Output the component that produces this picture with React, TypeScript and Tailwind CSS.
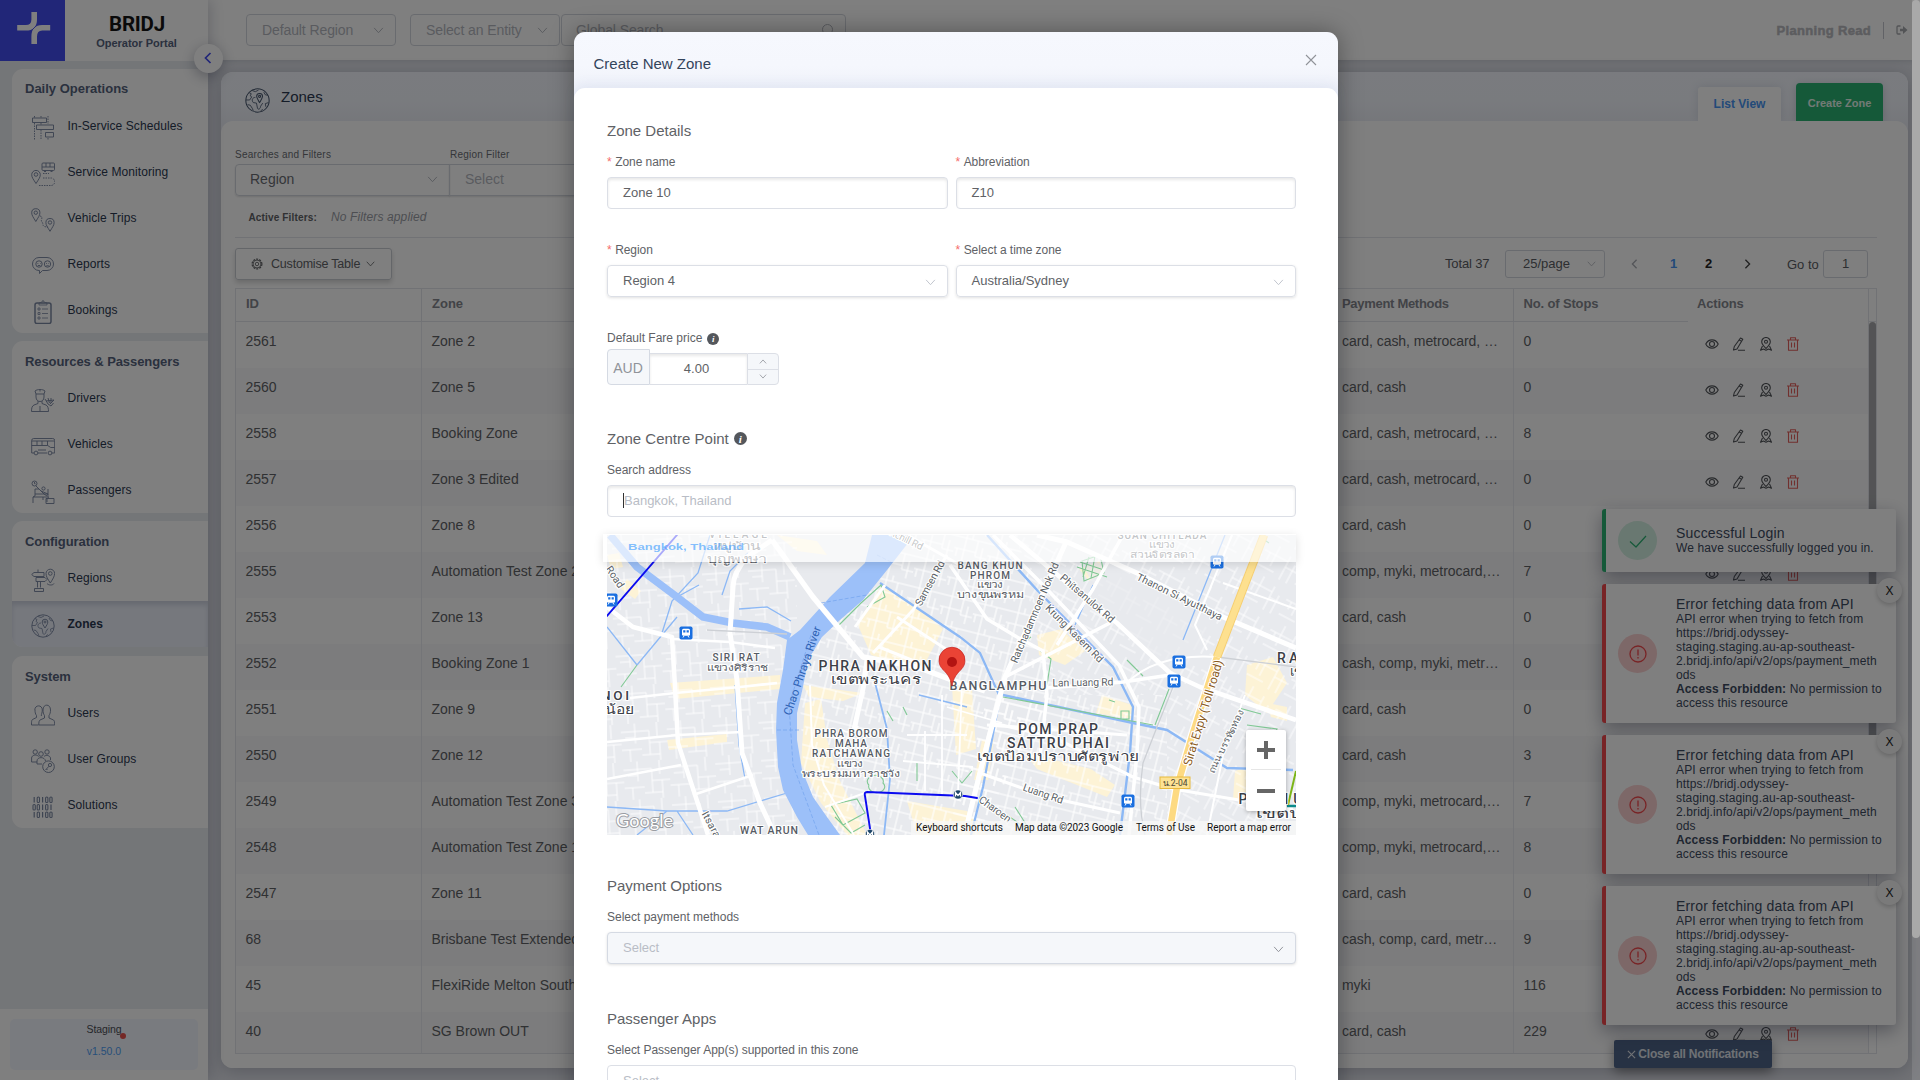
import React from "react";
import type { ReactNode } from "react";

type IconProps = { className?: string };

const Stroke = ({ className = "", w = 1, box = 24, children }: IconProps & { w?: number; box?: number; children: ReactNode }) => (
  <svg viewBox={`0 0 ${box} ${box}`} className={className} fill="none" stroke="currentColor" strokeWidth={w} strokeLinejoin="round">
    {children}
  </svg>
);

const Chevron = ({ className = "" }: IconProps) => (
  <svg viewBox="0 0 12 8" className={className} fill="none" stroke="currentColor" strokeWidth="1.1">
    <path d="M1 1l5 5.5L11 1" />
  </svg>
);

const navIcons: Record<string, ReactNode> = {
  schedules: (
    <>
      <rect x="1.5" y="2" width="14" height="4.5" />
      <rect x="5.5" y="9" width="17" height="4.5" />
      <rect x="14.5" y="16.5" width="8" height="4.5" />
      <path d="M3.5 7v17M10 14v10M3.5 0v2M10 0v2M10 7v2M17 0v8M17 22v2" strokeDasharray="1.5 1" />
    </>
  ),
  monitoring: (
    <>
      <rect x="11" y="1" width="12.5" height="7.5" rx="1" />
      <path d="M11 5h12.5M15 1v4M19 1v4M13 9.5h2M19.5 9.5h2" />
      <path d="M5 21.500C2.500 17.500.7 15.500.7 12.700a4.300 4.300 0 018.600 0c0 2.800-1.800 4.800-4.300 8.800z" />
      <circle cx="5" cy="12.500" r="1.800" />
      <path d="M12 11.500h6M12 16h8a3.500 3.500 0 010 7.500H7" strokeDasharray="1.500 1" />
    </>
  ),
  trips: (
    <>
      <path d="M4.800 13.500C2.500 9.500.7 7.500.7 4.800a4.100 4.100 0 018.200 0c0 2.700-1.800 4.700-4.100 8.700z" />
      <circle cx="4.800" cy="4.700" r="1.700" />
      <path d="M19 23.300c-2.300-4-4.100-6-4.100-8.700a4.100 4.100 0 018.200 0c0 2.700-1.800 4.700-4.100 8.700z" />
      <circle cx="19" cy="14.500" r="1.700" />
      <path d="M9 8c4 1 0 4 2 6s-1 5 6 5" strokeDasharray="1.500 1" />
    </>
  ),
  reports: (
    <>
      <path d="M8 3.500h8a6 6 0 010 13h-4.500l-3 3v-3H8a6 6 0 010-13z" />
      <circle cx="8" cy="10" r="3.200" />
      <circle cx="16.500" cy="10" r="3.200" />
      <path d="M6.500 9.500h.8M9 9.500h.6M6.800 11.500h2.500M15 9.500h.8M17.500 9.500h.6M15.300 11.800h2.500" />
    </>
  ),
  bookings: (
    <>
      <rect x="4" y="3" width="16" height="20.500" rx="2" strokeWidth="1.500" />
      <path d="M8 5V3l3-1 1-1.700L13 2l3 1v2zM7 8h2v2H7zM7 12.500h2v2H7zM7 17h2v2H7zM11 9h6M11 13.500h6M11 18h6" strokeWidth="0.800" />
    </>
  ),
  drivers: (
    <>
      <path d="M4 3c2-2 8-2 10 0l-1 3H5zM5 6v3c0 6 8 6 8 0V6M7 13v2.500L3 17c-2 1-2.500 3-2.500 6.500h17c0-3-.5-5.500-2.500-6.500l-4-1.500V13M9 18v5.500M9 2v1.500" />
      <path d="M14 11l3 5M17 10l1.500 5M20 10v5M23 12l-4 4M15 13l8-1M17 16l3 2 2.500-3" />
    </>
  ),
  vehicles: (
    <>
      <path d="M.7 6.500a2 2 0 012-2h19a2 2 0 012 2V19h-3M3 19H.7V6.500M7 19h9M.7 11.500h16l3 2h4M.7 7h23M6 7v4.500M11 7v4.500M16.500 7v4.500M7 16h8" />
      <circle cx="5" cy="19" r="1.900" />
      <circle cx="19" cy="19" r="1.900" />
    </>
  ),
  passengers: (
    <>
      <circle cx="3.500" cy="3.500" r="2.500" />
      <circle cx="12.500" cy="8.500" r="1.600" />
      <path d="M3.500 2v1.700h1M5 6l3 3M2 23v-6l2-1V9h4M8 9l5 5 3 2v6M4 14h12M10 11l7 3M17 9v6M2 17h13M15 18.500h8v5h-8zM17.500 18.500l-1-5M12 17v3" />
    </>
  ),
  regions: (
    <>
      <path d="M3 4.500h10v4H3l-2.300-2zM5 9.500h9l2 2-2 2H5zM7 1.500v3M6.500 13.500v6M9.500 13.500v6M3.500 20.500h9v3h-9z" />
      <path d="M19.300 15c-2.500-4-4.300-6.500-4.300-9.500a4.300 4.300 0 018.600 0c0 3-1.800 5.500-4.300 9.500z" />
      <circle cx="19.300" cy="5.500" r="1.800" />
      <path d="M16 15.500c1.500 2 6 2 7 0" />
    </>
  ),
  zones: (
    <>
      <circle cx="12" cy="12" r="11.200" />
      <path d="M14 14c-1.800-3-2.800-4.200-2.800-6a2.800 2.800 0 015.600 0c0 1.800-1 3-2.800 6z" />
      <circle cx="14" cy="8" r="1" />
      <path d="M4 4.500l2 1-1 2 1.500 1-2 3-3.500 0M7 2.500l3 1 3-1.500M10 9c-3 0-4 3-2 5l3 .5 1 5c1 2 3 0 3-2l2-3M18 4l1.500 2.500 2.500.5M22.500 14l-3 1 .5 3M2.500 16l2.500.5 2 3 1 2.500M15 22l2-1.500" strokeWidth="0.800" />
    </>
  ),
  users: (
    <>
      <path d="M3.800 7c0-5.500 7.500-5.500 7.500 0 0 3-1 3.500-1 6M4 7c0 2 .3 4 1.500 5.500v2l-4 2c-1 1-1 2-1 5.500h7" />
      <path d="M12 7c0-6.500 7.500-6.500 7.500 0 0 2.500-.5 4-1.500 5.500V15l4.500 2c1 1 1.200 2 1.200 5H7.800c0-3 .2-4 1.200-5l4.500-2v-2.500C12.500 11 12 9.500 12 7z" />
    </>
  ),
  groups: (
    <>
      <circle cx="4.200" cy="3" r="2.200" />
      <circle cx="16" cy="3" r="2.200" />
      <circle cx="10" cy="5" r="2.300" />
      <path d="M.6 13V9c0-3 5-4 7-1.500M.6 13H6M13 7.500c2-2 6-1 6.500 1.500v2M6 15v-3c0-4.500 8-4.500 8.500 0M6 15h5" />
      <circle cx="17.500" cy="17.700" r="5.800" />
      <circle cx="19" cy="16" r="1.600" />
      <path d="M18 17.200L14.500 21M15.500 20l1 1" />
    </>
  ),
  solutions: (
    <>
      {[
        [2, "10100"],
        [9.5, "00101"],
        [17, "10100"],
      ].map(([y, bits]) =>
        String(bits)
          .split("")
          .map((b, i) =>
            b === "1" ? (
              <path key={`${y}-${i}`} d={`M${3.2 + i * 4.2} ${y}v5.500`} strokeWidth="1.200" />
            ) : (
              <rect key={`${y}-${i}`} x={2 + i * 4.2} y={Number(y)} width="2.300" height="5.500" rx="1.100" strokeWidth="1.100" />
            ),
          ),
      )}
    </>
  ),
};

const groups = [
  { title: "Daily Operations", items: [["schedules", "In-Service Schedules"], ["monitoring", "Service Monitoring"], ["trips", "Vehicle Trips"], ["reports", "Reports"], ["bookings", "Bookings"]] },
  { title: "Resources & Passengers", items: [["drivers", "Drivers"], ["vehicles", "Vehicles"], ["passengers", "Passengers"]] },
  { title: "Configuration", items: [["regions", "Regions"], ["zones", "Zones"]] },
  { title: "System", items: [["users", "Users"], ["groups", "User Groups"], ["solutions", "Solutions"]] },
];

function Sidebar() {
  return (
    <aside className="relative z-10 flex w-[208px] shrink-0 flex-col bg-[#e9ecf0] shadow-[2px_0_14px_rgba(60,65,90,0.25)]">
      <div className="flex h-[61px] bg-white">
        <div className="h-[61px] w-[65px] bg-[#434cf0]">
          <svg viewBox="0 0 65 61" className="h-[61px] w-[65px]" fill="none" stroke="#fff" strokeWidth="5.600">
            <path d="M34.200 12v7.500q0 8.300-8.500 8.300h-8.500" />
            <path d="M34.200 44v-7.500q0-8.800 8-8.800h8" />
            <path d="M29 33l11-11" stroke="#434cf0" strokeWidth="0.900" />
          </svg>
        </div>
        <div className="flex flex-1 flex-col items-center pt-[14px]">
          <div className="pl-px font-[Roboto] text-[20.500px] leading-[20px] font-bold tracking-[-0.200px] text-[#141414]">BRIDJ</div>
          <div className="mt-[2px] text-[11px] leading-[14px] font-bold text-[#55627c]">Operator Portal</div>
        </div>
      </div>
      <div className="absolute top-[44px] left-[194px] flex size-[29px] items-center justify-center rounded-full bg-white pr-[2px] pb-[2px] shadow-[0_4px_14px_rgba(40,45,70,0.35)]">
        <svg viewBox="0 0 8 12" className="h-[12px] w-[8px]" fill="none" stroke="#434cf0" strokeWidth="1.700">
          <path d="M6.500 1L1.500 6l5 5" />
        </svg>
      </div>
      <nav className="flex flex-1 flex-col gap-2 pt-2 pl-3">
        {groups.map((g, gi) => (
          <section key={g.title} className="overflow-hidden rounded-l-[11px] bg-white last:mt-px">
            <h3 className={gi === 0 ? "h-[34px] pt-[12px] pl-[13px] text-[13px] leading-[16px] font-bold whitespace-nowrap text-[#55627c]" : "h-[34px] pt-[12.500px] pl-[13px] text-[13px] leading-[16px] font-bold tracking-[-0.080px] whitespace-nowrap text-[#55627c]"}>{g.title}</h3>
            {g.items.map(([icon, label]) => {
              const active = label === "Zones";
              return (
                <div key={label} className={active ? "flex h-[46px] items-center bg-[#edf1fb] pl-[19px] shadow-[inset_0_4px_5px_rgba(70,80,110,0.18)]" : "flex h-[46px] items-center pl-[19px]"}>
                  <Stroke className="mt-[3px] size-6 text-[#7b88a3]" w={0.95}>
                    {navIcons[icon]}
                  </Stroke>
                  <span className={active ? "ml-[12.500px] pb-px text-[12px] font-bold text-[#2b3850]" : "ml-[12.500px] pb-px text-[12px] tracking-[0.080px] text-[#2b3850]"}>{label}</span>
                </div>
              );
            })}
          </section>
        ))}
      </nav>
      <div className="h-[71px] bg-white px-[10px] pt-[10px]">
        <div className="flex h-[51px] flex-col items-center rounded-[5px] bg-[#f3f6fe] pt-[3px] text-[10.500px] leading-[14px]">
          <div className="relative tracking-[-0.100px] text-[#4a4d55]">
            Staging
            <span className="absolute top-[11px] -right-[5px] size-[6px] rounded-full bg-[#e8504c]" />
          </div>
          <div className="mt-[8px] text-[#4f9ff5]">v1.50.0</div>
        </div>
      </div>
    </aside>
  );
}

const rows: [string, string, string, string][] = [
  ["2561", "Zone 2", "card, cash, metrocard, …", "0"],
  ["2560", "Zone 5", "card, cash", "0"],
  ["2558", "Booking Zone", "card, cash, metrocard, …", "8"],
  ["2557", "Zone 3 Edited", "card, cash, metrocard, …", "0"],
  ["2556", "Zone 8", "card, cash", "0"],
  ["2555", "Automation Test Zone 2", "comp, myki, metrocard,…", "7"],
  ["2553", "Zone 13", "card, cash", "0"],
  ["2552", "Booking Zone 1", "cash, comp, myki, metr…", "0"],
  ["2551", "Zone 9", "card, cash", "0"],
  ["2550", "Zone 12", "card, cash", "3"],
  ["2549", "Automation Test Zone 3", "comp, myki, metrocard,…", "7"],
  ["2548", "Automation Test Zone 1", "comp, myki, metrocard,…", "8"],
  ["2547", "Zone 11", "card, cash", "0"],
  ["68", "Brisbane Test Extended", "cash, comp, card, metr…", "9"],
  ["45", "FlexiRide Melton South", "myki", "116"],
  ["40", "SG Brown OUT", "card, cash", "229"],
];

const cols = "grid grid-cols-[186px_909px_183px_174px_180px_8px]";

function RowActions() {
  return (
    <div className="flex items-center gap-[13px] pb-[3px] pl-[17px] text-[#515459]">
      <Stroke box={14} className="size-[14px]" w={1.1}>
        <path d="M.8 7C3.500 1.500 10.500 1.500 13.200 7 10.500 12.500 3.500 12.500.8 7z" />
        <circle cx="7" cy="7" r="2.500" />
      </Stroke>
      <Stroke box={14} className="size-[14px]" w={1.1}>
        <path d="M8.500 1l2.300 1.300L5 12l-3.500 1 .8-3.500zM7.300 3l2.300 1.400M6 13.200h7" />
      </Stroke>
      <Stroke box={14} className="size-[14px]" w={1.1}>
        <path d="M7 11.500C4 8.500 2.700 7.300 2.700 4.800a4.300 4.300 0 018.600 0c0 2.500-1.300 3.700-4.300 6.700zM3.500 9L1.500 13.300 4.500 12l2.500 1.300 2.500-1.300 3 1.300L10.500 9" />
        <circle cx="7" cy="4.800" r="1.500" />
      </Stroke>
      <Stroke box={14} className="size-[14px] text-[#e2605c]" w={1.1}>
        <path d="M1 3h12M4.500 3V.8h5V3M2.500 3v10.200h9V3M5.500 5.500v5M8.500 5.500v5" />
      </Stroke>
    </div>
  );
}

function ZoneTable() {
  return (
    <div className="h-[766px] w-[1642px] overflow-hidden border border-[#e2e4ea] text-[14px] text-[#606266]">
      <div className={`${cols} h-[33px] items-stretch text-[13px] leading-[29px] font-bold text-[#84878e]`}>
        <div className="border-r border-b border-[#e2e4ea] pl-[10px]">ID</div>
        <div className="border-b border-[#e2e4ea] pl-[10px]">Zone</div>
        <div className="border-r border-b border-[#e2e4ea] pl-[11px] tracking-[-0.300px]">Payment Methods</div>
        <div className="border-b border-[#e2e4ea] pl-[9.500px] tracking-[-0.150px]">No. of Stops</div>
        <div className="pl-[9px] tracking-[-0.150px]">Actions</div>
        <div className="border-b border-l border-[#e2e4ea]" />
      </div>
      <div className="flex">
        <div className="w-[1632px]">
          {rows.map(([id, zone, pay, stops], i) => (
            <div key={id} className={i % 2 ? "grid h-[46px] grid-cols-[186px_909px_183px_174px_180px] bg-[#f9f9fa] leading-[38px]" : "grid h-[46px] grid-cols-[186px_909px_183px_174px_180px] leading-[38px]"}>
              <div className="border-r border-[#e9ebf0] pl-[9.500px]">{id}</div>
              <div className="pl-[9.500px]">{zone}</div>
              <div className="border-r border-[#e9ebf0] pl-[11px] tracking-[-0.050px]">{pay}</div>
              <div className="pl-[9.500px]">{stops}</div>
              <RowActions />
            </div>
          ))}
        </div>
        <div className="w-[8px] border-l border-[#e2e4ea]">
          <div className="h-[520px] rounded-t-[4px] bg-[#a6a7aa]" />
        </div>
      </div>
    </div>
  );
}

function Background() {
  return (
    <div className="flex h-[1080px] w-[1920px] bg-[#e3e5ec]">
      <Sidebar />
      <div className="flex flex-1 flex-col">
        <header className="flex h-[60px] shrink-0 items-center bg-white pl-[38px] text-[14px] shadow-[0_1px_5px_rgba(40,45,70,0.15)]">
          {["Default Region", "Select an Entity"].map((t) => (
            <div key={t} className="mr-[14px] flex h-8 w-[150px] items-center justify-between rounded-[4px] border border-[#d3d6de] pr-[11px] pl-[15px] tracking-[-0.100px] text-[#b4b7bf]">
              {t}
              <Chevron className="h-[7px] w-[11px]" />
            </div>
          ))}
          <div className="-ml-[13px] flex h-8 w-[285px] items-center justify-between rounded-[4px] border border-[#d3d6de] pr-[10px] pl-[14px] tracking-[-0.100px] text-[#b4b7bf]">
            Global Search
            <svg viewBox="0 0 14 14" className="size-[14px]" fill="none" stroke="currentColor">
              <circle cx="6.500" cy="6.500" r="5" />
              <path d="M10 10l3 3" />
            </svg>
          </div>
          <div className="flex-1" />
          <span className="pt-[2px] text-[13px] font-bold tracking-[0.320px] text-[#b8b9be] [-webkit-text-stroke:0.500px_#b8b9be]">Planning Read</span>
          <span className="ml-[12px] h-[17px] w-px bg-[#c2c5cc]" />
          <svg viewBox="0 0 12 10" className="mr-[12px] ml-[12px] h-[10px] w-[12px]" fill="none" stroke="#a6a8ad" strokeWidth="1.300">
            <path d="M4.500 1H2a1 1 0 00-1 1v6a1 1 0 001 1h2.500" />
            <path d="M4 3.700h3V1l4.500 4L7 9V6.300H4z" fill="#a6a8ad" stroke="none" />
          </svg>
        </header>
        <main className="mt-[12px] ml-[13px] h-[996px] w-[1687px] rounded-[12px] bg-white shadow-[0_3px_18px_rgba(60,65,90,0.3)]">
          <div className="flex h-[60px] justify-between rounded-t-[12px] bg-gradient-to-b from-[#f4f7fe] via-[#f3f6fd] to-[#e7eaf2]">
            <div className="flex pl-[24px]">
              <Stroke className="mt-[16px] size-[25px] text-[#44546b]" w={1}>
                {navIcons.zones}
              </Stroke>
              <h1 className="mt-[15px] ml-[11px] text-[15px] leading-[20px] text-[#2b3850]">Zones</h1>
            </div>
            <div className="flex items-end pr-[25px] pb-[11px]">
              <div className="mr-[15px] flex h-[34px] w-[83px] items-center justify-center rounded-t-[3px] bg-white text-[12px] font-bold text-[#4794f2] shadow-[0_0_10px_rgba(70,80,110,0.15)]">List View</div>
              <div className="flex h-[38px] w-[87px] items-center justify-center rounded-t-[4px] bg-[#2bb273] pt-[2px] text-[11px] font-bold text-[#e4f5ec] shadow-[0_2px_8px_rgba(40,50,80,0.2)]">Create Zone</div>
            </div>
          </div>
          <div className="relative -mt-[11px] h-[947px] rounded-[12px] bg-white pt-[28px] pl-[14px]">
            <div className="flex text-[10px] leading-[12px] tracking-[0.220px] text-[#6a6d73]">
              <span className="w-[215px]">Searches and Filters</span>
              <span>Region Filter</span>
            </div>
            <div className="mt-[3px] flex text-[14px]">
              <div className="flex h-8 w-[215px] items-center justify-between rounded-l-[4px] border border-[#d3d6de] pr-[11px] pb-px pl-[14px] text-[#6a6d73] shadow-[0_1px_2px_rgba(0,0,0,0.12)]">
                Region
                <Chevron className="h-[7px] w-[11px] text-[#b4b7bf]" />
              </div>
              <div className="-ml-px flex h-8 w-[216px] items-center rounded-r-[4px] border border-[#d3d6de] pb-px pl-[15px] text-[#b4b7bf] shadow-[0_1px_2px_rgba(0,0,0,0.12)]">Select</div>
            </div>
            <div className="mt-[13px] flex h-[16px] items-center pl-[13.500px] text-[10px] font-bold tracking-[0.150px] text-[#606266]">
              <span className="pt-px">Active Filters:</span>
              <span className="ml-[14px] text-[12px] font-normal tracking-[0.130px] text-[#9a9da5] italic">No Filters applied</span>
            </div>
            <div className="mt-[12px] h-px w-[1642px] bg-[#e2e4ea]" />
            <div className="mt-[10px] flex w-[1642px] items-start justify-between text-[13px] text-[#5a5d63]">
              <button className="flex h-8 w-[157px] items-center rounded-[3px] border border-[#c9ccd3] pl-[15px] text-[12.500px] text-[#606266] shadow-[0_3px_5px_rgba(0,0,0,0.16)]">
                <Stroke box={14} className="size-[12px]" w={1}>
                  <circle cx="7" cy="7" r="5.700" strokeDasharray="2.400 1.200" strokeWidth="1.400" />
                  <circle cx="7" cy="7" r="4.600" />
                  <circle cx="7" cy="7" r="2" />
                </Stroke>
                <span className="ml-[8px] tracking-[-0.200px]">Customise Table</span>
                <Chevron className="ml-[6px] h-[6px] w-[9px]" />
              </button>
              <div className="flex h-[28px] items-center self-center pr-[9px]">
                <span className="w-[60px] text-[13px] tracking-[-0.150px]">Total 37</span>
                <div className="flex h-[28px] w-[100px] items-center justify-between rounded-[3px] border border-[#d3d6de] pr-[8px] pl-[17px] text-[13px]">
                  25/page
                  <Chevron className="h-[6px] w-[9px] text-[#b4b7bf]" />
                </div>
                <svg viewBox="0 0 8 12" className="ml-[26px] h-[10px] w-[7px]" fill="none" stroke="#a9acb3" strokeWidth="1.600">
                  <path d="M6.500 1L1.500 6l5 5" />
                </svg>
                <span className="ml-[32px] w-[8px] font-bold text-[#4794f2]">1</span>
                <span className="ml-[27px] w-[8px] font-bold text-[#222]">2</span>
                <svg viewBox="0 0 8 12" className="ml-[31px] h-[10px] w-[7px]" fill="none" stroke="#444" strokeWidth="1.600">
                  <path d="M1.500 1l5 5-5 5" />
                </svg>
                <span className="ml-[36px] w-[36px] pt-px text-[13px]">Go to</span>
                <div className="flex h-[28px] w-[45px] items-center justify-center rounded-[3px] border border-[#d3d6de]">1</div>
              </div>
            </div>
            <div className="mt-[8px]">
              <ZoneTable />
            </div>
          </div>
        </main>
      </div>
    </div>
  );
}

function Toast({ ok = false }: { ok?: boolean }) {
  return (
    <div className={ok ? "relative flex h-[63px] w-[294px] items-center rounded-[3px] border-l-4 border-[#2bb273] bg-white shadow-[0_6px_18px_rgba(30,35,60,0.38)]" : "relative flex h-[139px] w-[294px] items-center rounded-[3px] border-l-4 border-[#f0484c] bg-white shadow-[0_6px_18px_rgba(30,35,60,0.38)]"}>
      <div className={ok ? "ml-[12px] flex size-[39px] items-center justify-center rounded-full bg-[#d3f0e2] text-[#2bb273]" : "ml-[12px] flex size-[39px] items-center justify-center rounded-full bg-[#fbd0d0] text-[#f0484c]"}>
        {ok ? (
          <Stroke box={18} className="size-[18px]" w={1.2}>
            <path d="M1 9.500l6 5.500L17 4" />
          </Stroke>
        ) : (
          <Stroke box={18} className="size-[18px]" w={1.3}>
            <circle cx="9" cy="9" r="8" />
            <path d="M9 4.500v6M9 12v1.500" />
          </Stroke>
        )}
      </div>
      <div className="pb-[1px] pl-[19px] text-[12px] leading-[14px] tracking-[0.130px] whitespace-nowrap text-[#3c4a60]">
        <div className="text-[14px] leading-[16px] tracking-[0.180px]">{ok ? "Successful Login" : "Error fetching data from API"}</div>
        {ok ? (
          <div>We have successfully logged you in.</div>
        ) : (
          <>
            <div>API error when trying to fetch from</div>
            <div>https://bridj.odyssey-</div>
            <div>staging.staging.au-ap-southeast-</div>
            <div>2.bridj.info/api/v2/ops/payment_meth</div>
            <div>ods</div>
            <div>
              <b>Access Forbidden:</b> No permission to
            </div>
            <div>access this resource</div>
          </>
        )}
      </div>
      {!ok && <div className="absolute -top-[6px] -right-[6px] flex size-[25px] items-center justify-center rounded-full bg-[#f4f4f5] text-[12px] text-[#222] shadow-[0_2px_5px_rgba(0,0,0,0.2)]">X</div>}
    </div>
  );
}

const Station = ({ x, y }: { x: number; y: number }) => (
  <g transform={`translate(${x} ${y})`}>
    <rect x="-6.500" y="-6.500" width="13" height="13" rx="1.800" fill="#1a6fe0" />
    <rect x="-4" y="-4.300" width="8" height="7" rx="1.500" fill="#fff" />
    <path d="M-2.800 -2.800h2.200v2.300h-2.200zM.6 -2.800h2.200v2.300h-2.200z" fill="#1a6fe0" />
    <path d="M-3 4.500l1-1.500M3 4.500L2 3" stroke="#fff" />
  </g>
);

const Metro = ({ x, y }: { x: number; y: number }) => (
  <g transform={`translate(${x} ${y})`}>
    <circle r="4.600" fill="#1d4568" stroke="#fff" strokeWidth="0.600" />
    <path d="M-2.500 2v-4l2.500 3 2.500-3v4" fill="none" stroke="#fff" strokeWidth="1.300" />
  </g>
);

type Lbl = { x: number; y: number; t: string; w: number; s?: number; r?: number; c?: string; b?: boolean; th?: boolean };

const labels: Lbl[] = [
  { x: 131, y: 3, t: "VILLAGE", w: 58, s: 10 },
  { x: 130, y: 15, t: "หมู่บ้าน", w: 49, s: 11, th: true },
  { x: 130, y: 28, t: "บุญพงษา", w: 60, s: 11, th: true },
  { x: 129, y: 126, t: "SIRI RAT", w: 47, s: 10 },
  { x: 130, y: 136, t: "แขวงศิริราช", w: 61, s: 9.5, th: true },
  { x: 268, y: 136, t: "PHRA NAKHON", w: 113, s: 14, b: true },
  { x: 269, y: 149, t: "เขตพระนคร", w: 90, s: 13, b: true, th: true },
  { x: 244, y: 202, t: "PHRA BOROM", w: 73, s: 10 },
  { x: 244, y: 212, t: "MAHA", w: 32, s: 10 },
  { x: 244, y: 222, t: "RATCHAWANG", w: 78, s: 10 },
  { x: 243, y: 232, t: "แขวง", w: 27, s: 9.5, th: true },
  { x: 244, y: 242, t: "พระบรมมหาราชวัง", w: 99, s: 9.5, th: true },
  { x: 162, y: 299, t: "WAT ARUN", w: 58, s: 10.5 },
  { x: 8, y: 165, t: "NOI", w: 28, s: 13.5, b: true },
  { x: 13, y: 179, t: "น้อย", w: 30, s: 13, b: true, th: true },
  { x: 383, y: 34, t: "BANG KHUN", w: 65, s: 10 },
  { x: 383, y: 44, t: "PHROM", w: 40, s: 10 },
  { x: 383, y: 53, t: "แขวง", w: 27, s: 9.5, th: true },
  { x: 383, y: 63, t: "บางขุนพรหม", w: 67, s: 9.5, th: true },
  { x: 391, y: 155, t: "BANGLAMPHU", w: 97, s: 12.5 },
  { x: 451, y: 199, t: "POM PRAP", w: 80, s: 14, b: true },
  { x: 451, y: 213, t: "SATTRU PHAI", w: 102, s: 14, b: true },
  { x: 451, y: 226, t: "เขตป้อมปราบศัตรูพ่าย", w: 163, s: 13, b: true, th: true },
  { x: 555, y: 3.5, t: "SUAN CHITLADA", w: 89, s: 10 },
  { x: 555, y: 13, t: "แขวง", w: 27, s: 9.5, th: true },
  { x: 555, y: 23, t: "สวนจิตรลดา", w: 65, s: 9.5, th: true },
  { x: 686, y: 128, t: "RAT", w: 32, s: 14, b: true },
  { x: 694, y: 141, t: "เขต", w: 22, s: 13, b: true, th: true },
  { x: 672, y: 269, t: "PATHUM", w: 81, s: 14, b: true },
  { x: 686, y: 283, t: "เขตปทุม", w: 74, s: 13, b: true, th: true },
  { x: 199, y: 137, t: "Chao Phraya River", w: 93, s: 11.5, r: -71, c: "#2f63b5" },
  { x: 326, y: 50, t: "Samsen Rd", w: 50, s: 10.5, r: -61, c: "#5b5f66" },
  { x: 297, y: 7, t: "Vichill Rd", w: 38, s: 10, r: 26, c: "#5b5f66" },
  { x: 5, y: 44, t: "Road", w: 24, s: 10.5, r: 56, c: "#5b5f66" },
  { x: 431, y: 79, t: "Ratchadamnoen Nok Rd", w: 108, s: 10.5, r: -67, c: "#5b5f66" },
  { x: 478, y: 66, t: "Phitsanulok Rd", w: 68, s: 10.5, r: 41, c: "#5b5f66" },
  { x: 465, y: 101, t: "Krung Kasem Rd", w: 77, s: 10.5, r: 45, c: "#5b5f66" },
  { x: 571, y: 65, t: "Thanon Si Ayutthaya", w: 94, s: 10.5, r: 26, c: "#5b5f66" },
  { x: 476, y: 151, t: "Lan Luang Rd", w: 61, s: 10.5, r: -1, c: "#5b5f66" },
  { x: 435, y: 262, t: "Luang Rd", w: 42, s: 10.5, r: 19, c: "#5b5f66" },
  { x: 386, y: 277, t: "Charoen", w: 37, s: 10.5, r: 36, c: "#5b5f66" },
  { x: 101, y: 291, t: "Itsara", w: 28, s: 10.5, r: 62, c: "#5b5f66" },
  { x: 600, y: 179, t: "Sirat Expy (Toll road)", w: 110, s: 12, r: -73, c: "#8a5a1c" },
  { x: 622, y: 208, t: "ถนน บรรทัดทอง", w: 70, s: 9.5, r: -64, c: "#5b5f66", th: true },
];

function MapCanvas() {
  return (
    <svg viewBox="0 0 689 300" className="block h-[300px] w-[689px] font-[Roboto,'Noto_Sans',sans-serif]">
      <defs>
        <pattern id="streetsA" width="46" height="38" patternUnits="userSpaceOnUse" patternTransform="rotate(-4)">
          <path d="M0 8h28M14 0v20M28 8v24M0 26h20M36 0v14M28 20h18M8 26v12M38 20v18M20 32h18M4 14h10" stroke="#fff" strokeWidth="0.900" fill="none" />
        </pattern>
        <pattern id="streetsB" width="34" height="30" patternUnits="userSpaceOnUse" patternTransform="rotate(14)">
          <path d="M0 6h34M10 0v30M22 6v16M0 18h22M28 12v18M22 22h12M3 18v8M16 0v6" stroke="#fff" strokeWidth="1.100" fill="none" />
        </pattern>
        <pattern id="streetsC" width="42" height="34" patternUnits="userSpaceOnUse" patternTransform="rotate(28)">
          <path d="M0 10h26M12 0v22M26 4v26M0 26h18M34 10v20M26 16h16M6 10v8" stroke="#fff" strokeWidth="0.900" fill="none" />
        </pattern>
      </defs>
      <rect width="689" height="300" fill="#e8eaee" />
      <g fill="#fdf3d6">
        <path d="M250 88l25-38 33 20 28 24-22 42-50-16z" />
        <path d="M196 150l60 8-20 8-34-4zM198 168l-4 60 20 40 26 32h20l-28-56-12-40-6-40z" />
        <path d="M63 148l110-8v14l-105 10zM60 205l60-6v8l-58 8zM20 44l14 12-6 8-14-10zM170 0l40 6 10 14-30-4zM0 20l12-2 4 14-12 2z" />
        <path d="M345 150l20 4 4 60-20 6zM430 100l24-6 24 22-20 14-26-10zM495 160l30 10v14l-36-6zM640 130l26-8 14 26-20 30-22-18zM418 218l66 16 24 16-8 12-70-28zM628 236l20-6v32l-22 2zM300 266l60 10 20 24h-70zM375 205l12 0-6 40-14 0zM472 34l20-8 6 12-16 8zM660 168l20 4 0 14-16-4z" />
      </g>
      <rect width="190" height="300" fill="url(#streetsA)" />
      <path d="M190 110L300 0h110l40 150-80 150H200z" fill="url(#streetsB)" />
      <path d="M380 160h180v140H340z" fill="url(#streetsB)" />
      <path d="M410 0h279v300H560V160H440z" fill="url(#streetsC)" />
      <path d="M470 18l60 28 78 34-26 50-18 6-60-50-20-40z" fill="#e8eaee" opacity="0.700" />
      <g fill="none" stroke="#8cb8f5" strokeWidth="1.300">
        <path d="M55 98l10-32 26-28 12-38M70 62l22-12M115 60l8-24 18-18M132 74l28-2 24 14M0 92l30 38M30 130l40-48M128 150l4 60 6 34M0 272l60 4 60 0 60-18M60 276l-30 24M70 276l16 24" />
        <path d="M273 48l80 54 20 16 20 44-17 90-12 48" strokeWidth="2.200" />
        <path d="M266 140l14 54 3 50-6 56" strokeWidth="1.800" />
        <path d="M380 0l50 55 76 77 20 40-3 46-10 82" strokeWidth="2.400" />
        <path d="M618 0l-42 105M468 90l18-40M312 160l48 12" />
        <path d="M396 160l130 28 34 7 60 38 66 2" strokeWidth="2.400" />
      </g>
      <g fill="none" stroke="#81c995" strokeWidth="1.100">
        <path d="M475 26l18-6 4 18-20 8zM470 32l30 10M482 22l-6 20M488 21l-4 22M473 27l24 8M396 162l150 28M426 110l18 14-4 26M232 90l22-22 20-18 4 12-18 10M224 270l26-6 8 14-22 12zM228 282l16 16 14-8M262 250a8 6 0 1014-2 8 6 0 10-14 2M520 125l16 16M548 190l14-36M632 173l22 6M640 190l30 4-4 10-22-4M280 176l6 10M296 172l4 8M30 130l-16 22M345 236l10 12 10-12M400 280l20 14M408 272l14 22M502 165l6 2M418 106l6-4M310 228v18M656 4l6 4M514 176h8v8h-8z" />
      </g>
      <path d="M3 0l27 32 40 30 26 20 30 6 34 4 23 10" fill="none" stroke="#9cc0f9" strokeWidth="7.500" />
      <path d="M265 0L258 28L223 62L193 95L180 105L176 135L170 168L169 195L171 232L176 255L190 282L201 300H233L220 282L206 262L195 235L190 205V178L196 152L201 125L215 102L233 85L256 65L280 35L301 8L303 0Z" fill="#9cc0f9" />
      <path d="M214 68l46-8M204 100l-22 70 4 60 26 70M270 20l16 8M170 195h22" fill="none" stroke="#72a3ee" strokeWidth="0.700" strokeDasharray="4 2" />
      <g fill="none" stroke="#fff" strokeLinejoin="round">
        <path d="M165 5L206 62L256 122L310 132L353 148L378 156" strokeWidth="5.500" />
        <path d="M260 125l-3 24-10 46" strokeWidth="5" />
        <path d="M165 5L140 22Q126 38 126 52L123 98L130 145L135 218L153 268L168 300" strokeWidth="5" />
        <path d="M0 72L26 92L65 102L68 152L71 208L93 275L101 300" strokeWidth="4.500" />
        <path d="M23 163L68 158L133 152L170 148M0 207L71 200L135 197M65 104l58 3 45 6M0 244l74-14M86 260l60-20" strokeWidth="2.600" />
        <path d="M300 0L353 30M340 20L306 75L266 118M290 82l64 42M272 112l40 16M278 50l-30 42" strokeWidth="3" />
        <path d="M203 150l2 60 12 40 30 50M258 258l-40 14M235 195q10 6 16-4" strokeWidth="2" />
        <path d="M355 148l-4 110M340 172l55 16M300 200h60M296 226l70 6M318 196v60M335 160v100" strokeWidth="1.800" />
        <path d="M343 30L380 84L410 102L436 116L440 160L432 230" strokeWidth="3.500" />
        <path d="M460 5L398 142L380 210L360 290" strokeWidth="5" />
        <path d="M386 0l50 50 76 80 20 42-2 46-8 82" strokeWidth="3.500" />
        <path d="M403 0L453 42L510 88L563 138L593 152L689 185" strokeWidth="4.500" />
        <path d="M430 0L460 7L530 38L616 82L689 113" strokeWidth="5" />
        <path d="M503 88L398 142M440 153L516 147L563 140M516 0L486 54L450 110" strokeWidth="3.500" />
        <path d="M373 238L440 262L513 278M386 188l60 14 80 40 40 12 120 20M380 190L520 200" strokeWidth="3.200" />
        <path d="M625 0L588 90L600 115M520 148q30-30 90-26M638 160L616 220L600 300M616 48l73 26" strokeWidth="2" />
      </g>
      <path d="M570 142l-20 50-14 36q-6 40 2 72M610 122l79 10M100 95l80 4" fill="none" stroke="#cdd0d5" strokeWidth="1.300" />
      <path d="M657 0L633 62L610 122" fill="none" stroke="#f6cf72" strokeWidth="8.500" />
      <path d="M657 0L633 62L610 122" fill="none" stroke="#fde08f" strokeWidth="6.500" />
      <path d="M610 122L586 198L570 252L562 300" fill="none" stroke="#fff" strokeWidth="9" />
      <path d="M610 122L586 198L570 252L562 300" fill="none" stroke="#fdda82" strokeWidth="6.500" />
      <path d="M70 0L0 81M370 263l-12-2-98-4q-3 0-2 4l6 39" fill="none" stroke="#0b0bf0" strokeWidth="1.900" strokeLinecap="round" />
      <path d="M689 236l-8 34" stroke="#7cb518" strokeWidth="2" />
      <path d="M680 271h9" stroke="#0c8a8a" strokeWidth="2.500" />
      {labels.map((l, i) => (
        <text
          key={i}
          x={l.x}
          y={l.y}
          textAnchor="middle"
          textLength={l.w}
          lengthAdjust={l.th ? "spacingAndGlyphs" : "spacing"}
          fontSize={l.s}
          fontWeight={l.c ? 400 : 500}
          fill={l.c ?? (l.b ? "#3c4048" : "#565b64")}
          stroke="#fff"
          strokeWidth={l.c === "#2f63b5" ? 0 : 2.2}
          strokeLinejoin="round"
          paintOrder="stroke"
          transform={l.r ? `rotate(${l.r} ${l.x} ${l.y})` : undefined}
        >
          {l.t}
        </text>
      ))}
      <g>
        <rect x="553" y="242" width="30" height="11.500" fill="#fde293" stroke="#e8b93c" />
        <text x="568" y="251" textAnchor="middle" fontSize="8.500" textLength="25" fill="#4a4636">
          น.2-04
        </text>
      </g>
      <Station x={79} y={98} />
      <Station x={4} y={65} />
      <Station x={610} y={27} />
      <Station x={572} y={127} />
      <Station x={567} y={146} />
      <Station x={521} y={266} />
      <Metro x={351} y={259.5} />
      <Metro x={263} y={299} />
      <g transform="translate(0 1)">
        <path d="M345 150c-1.500-8-4-11-8-15.500a13 13 0 1116 0c-4 4.500-6.500 7.500-8 15.500z" fill="#ea4335" stroke="#c5221f" strokeWidth="0.700" />
        <circle cx="345" cy="126" r="5" fill="#b31412" />
      </g>
      <text x="9" y="292" fontSize="18" textLength="57" fill="#fff" stroke="#9a9da3" strokeWidth="2" paintOrder="stroke" className="font-[Lato]">
        Google
      </text>
      <rect x="304" y="286" width="385" height="14" fill="#f7f7f7" opacity="0.780" />
      <g fontSize="10" fill="#111">
        <text x="309" y="296" textLength="87">Keyboard shortcuts</text>
        <text x="408" y="296" textLength="108">Map data ©2023 Google</text>
        <text x="529" y="296" textLength="59">Terms of Use</text>
        <text x="600" y="296" textLength="84">Report a map error</text>
      </g>
    </svg>
  );
}

function ZoneMap() {
  return (
    <div className="relative mt-[18px] h-[300px] w-[689px]">
      <MapCanvas />
      <div className="absolute -top-px -left-[4px] flex h-[28px] w-[693px] items-center bg-white/65 pl-[25px] shadow-[0_2px_10px_rgba(0,0,0,0.13)]">
        <span className="origin-left scale-x-[1.450] text-[9px] font-bold whitespace-nowrap text-[#409eff]/65">Bangkok, Thailand</span>
      </div>
      <div className="absolute top-[195px] left-[639px] flex h-[81px] w-[40px] flex-col items-center rounded-[2px] bg-white shadow-[0_1px_4px_rgba(0,0,0,0.3)]">
        <div className="relative flex h-[40px] w-[30px] items-center justify-center border-b border-[#e6e6e6]">
          <span className="h-[4px] w-[18px] bg-[#666]" />
          <span className="absolute h-[18px] w-[4px] bg-[#666]" />
        </div>
        <div className="flex h-[41px] items-center justify-center">
          <span className="h-[4px] w-[18px] bg-[#666]" />
        </div>
      </div>
    </div>
  );
}

const Info = ({ className = "" }: IconProps) => (
  <span className={`inline-flex items-center justify-center rounded-full bg-[#54575c] font-['Liberation_Serif'] font-bold text-white italic ${className}`}>i</span>
);

function Field({ label, value, select = false }: { label: string; value: string; select?: boolean }) {
  return (
    <div className="flex-1">
      <div className="text-[12px] leading-[14px] tracking-[-0.050px] text-[#606266]">
        <span className="mr-[3.500px] text-[#f56c6c]">*</span>
        {label}
      </div>
      <div className={select ? "mt-[8px] flex h-8 items-center justify-between rounded-[4px] border border-[#dcdfe6] pr-[11px] pb-px pl-[15px] text-[13px] text-[#606266] shadow-[0_1px_3px_rgba(0,0,0,0.12)]" : "mt-[8px] flex h-8 items-center rounded-[4px] border border-[#dcdfe6] pb-px pl-[15px] text-[13px] text-[#606266] shadow-[inset_0_2px_3px_rgba(0,0,0,0.09)]"}>
        {value}
        {select && <Chevron className="mt-[4px] h-[7px] w-[11px] text-[#c0c4cc]" />}
      </div>
    </div>
  );
}

const Heading = ({ children }: { children: ReactNode }) => <h2 className="flex items-center text-[15px] leading-[18px] text-[#606266]">{children}</h2>;

function Modal() {
  return (
    <div className="mt-[32px] h-[1200px] w-[764px] rounded-[11px] bg-gradient-to-b from-[#f6f8fe] from-0% via-[#f5f7fd] via-[34px] to-[#edf0f9] to-[62px] shadow-[0_0_24px_rgba(0,0,0,0.35)]">
      <div className="flex h-[56px] items-start justify-between pr-[21px] pl-[19.500px]">
        <h2 className="pt-[23px] text-[15px] leading-[18px] text-[#33445c]">Create New Zone</h2>
        <svg viewBox="0 0 12 12" className="mt-[22px] size-[12px]" fill="none" stroke="#909399" strokeWidth="1.100">
          <path d="M1 1l10 10M11 1L1 11" />
        </svg>
      </div>
      <div className="h-[1144px] rounded-t-[11px] bg-white pt-[34px] pl-[33px] shadow-[0_-4px_12px_rgba(90,110,160,0.08)]">
        <div className="w-[689px]">
          <Heading>Zone Details</Heading>
          <div className="mt-[15px] flex gap-[8px]">
            <Field label="Zone name" value="Zone 10" />
            <Field label="Abbreviation" value="Z10" />
          </div>
          <div className="mt-[34px] flex gap-[8px]">
            <Field label="Region" value="Region 4" select />
            <Field label="Select a time zone" value="Australia/Sydney" select />
          </div>
          <div className="mt-[34px] flex items-center text-[12px] leading-[14px] text-[#606266]">
            Default Fare price
            <Info className="mt-[2px] ml-[5px] size-[12px] text-[9px]" />
          </div>
          <div className="mt-[4px] flex items-end">
            <div className="flex h-[36px] w-[43px] items-center justify-center rounded-l-[4px] border border-[#d5dae3] bg-[#f5f7fa] pt-[2px] pr-px text-[14px] text-[#909399]">AUD</div>
            <div className="flex h-[32px] w-[97px] items-center justify-center border-y border-[#dcdfe6] pr-[4px] pb-px text-[13px] text-[#606266] shadow-[inset_0_2px_3px_rgba(0,0,0,0.09)]">4.00</div>
            <div className="flex h-[32px] w-[32px] flex-col rounded-r-[4px] border border-[#dcdfe6] bg-[#f5f7fa] text-[#80838a]">
              <div className="flex flex-1 items-center justify-center border-b border-[#dcdfe6]">
                <Chevron className="h-[5px] w-[8px] rotate-180" />
              </div>
              <div className="flex flex-1 items-center justify-center">
                <Chevron className="h-[5px] w-[8px]" />
              </div>
            </div>
          </div>
          <div className="mt-[45px]">
            <Heading>
              Zone Centre Point
              <Info className="mb-px ml-[5px] size-[13px] text-[11px]" />
            </Heading>
          </div>
          <div className="mt-[15px] text-[12px] leading-[14px] text-[#606266]">Search address</div>
          <div className="mt-[8px] flex h-8 items-center rounded-[4px] border border-[#dcdfe6] pb-px pl-[15px] text-[13px] text-[#b9bdc6] shadow-[inset_0_2px_3px_rgba(0,0,0,0.09)]">
            <span className="h-[15px] w-px bg-[#303133]" />
            Bangkok, Thailand
          </div>
          <ZoneMap />
          <div className="mt-[42px]">
            <Heading>Payment Options</Heading>
          </div>
          <div className="mt-[15px] text-[12px] leading-[14px] text-[#606266]">Select payment methods</div>
          <div className="mt-[8px] flex h-8 items-center justify-between rounded-[4px] border border-[#d5dae3] bg-[#f5f7fa] pr-[11px] pb-px pl-[15px] text-[13px] text-[#b9bdc6] shadow-[0_1px_3px_rgba(0,0,0,0.12)]">
            Select
            <Chevron className="mt-[4px] h-[7px] w-[11px] text-[#909399]" />
          </div>
          <div className="mt-[46px]">
            <Heading>Passenger Apps</Heading>
          </div>
          <div className="mt-[15px] text-[12px] leading-[14px] tracking-[-0.030px] text-[#606266]">Select Passenger App(s) supported in this zone</div>
          <div className="mt-[8px] flex h-8 items-center rounded-[4px] border border-[#dcdfe6] pb-px pl-[15px] text-[13px] text-[#b9bdc6]">Select</div>
        </div>
      </div>
    </div>
  );
}

export default function App() {
  return (
    <div className="relative h-[1080px] w-[1920px] overflow-hidden font-['Liberation_Sans',Arial,sans-serif]">
      <Background />
      <div className="absolute top-[509px] left-[1602px] z-20 flex flex-col gap-[12px]">
        <Toast ok />
        <Toast />
        <Toast />
        <Toast />
        <button className="mt-[3px] ml-[12px] flex h-[28px] w-[158px] items-center justify-center rounded-[2px] bg-[#4e6488] text-[12px] font-bold tracking-[-0.220px] text-[#dfe3ea] shadow-[0_4px_12px_rgba(0,0,0,0.4)]">
          <svg viewBox="0 0 10 10" className="mr-[2px] size-[9px]" fill="none" stroke="currentColor" strokeWidth="1.300">
            <path d="M1 1l8 8M9 1L1 9" />
          </svg>
          Close all Notifications
        </button>
      </div>
      <div className="absolute inset-0 z-30 flex bg-black/50">
        <div className="flex w-[1912px] justify-center">
          <Modal />
        </div>
        <div className="w-[8px] bg-white/10">
          <div className="h-[938px] rounded-[4px] bg-[#a9a9a9]" />
        </div>
      </div>
    </div>
  );
}
